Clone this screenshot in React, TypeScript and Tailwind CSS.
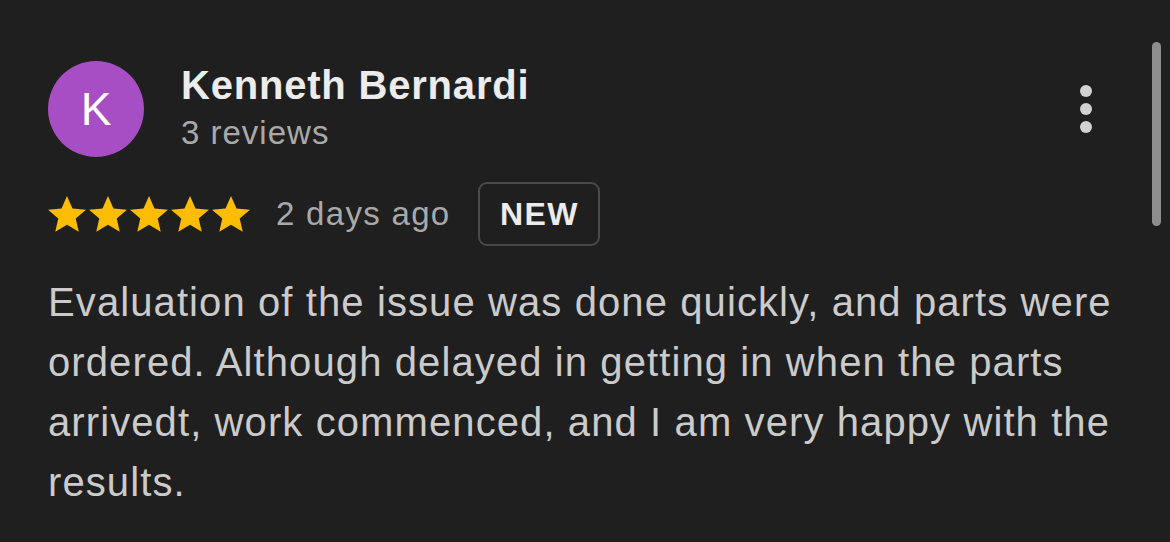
function Star() {
  return (
    <svg viewBox="2 2.2 20 19" className="w-[38px] h-[36px]" fill="#fbbc04">
      <path d="M12 2.2l2.9 6.6 7.1.6-5.4 4.7 1.6 7-6.2-3.7-6.2 3.7 1.6-7L2 9.4l7.1-.6z" />
    </svg>
  );
}

export default function App() {
  return (
    <div
      className="relative w-[1170px] h-[542px] overflow-hidden bg-[#1f1f1f]"
      style={{ fontFamily: '"Liberation Sans", Arial, sans-serif' }}
    >
      {/* Review card */}
      <div className="pl-[48px] pt-[61px]">
        {/* Header */}
        <div className="flex items-start">
          <div className="flex items-center justify-center w-[96px] h-[96px] rounded-full bg-[#a84ec5] text-white text-[46px] leading-none shrink-0">
            K
          </div>
          <div className="ml-[37px] pt-[2px] flex-1">
            <div className="text-[#ececec] text-[40px] font-bold leading-[44px] tracking-[0.8px]">Kenneth Bernardi</div>
            <div className="text-[#a9a9a9] text-[33px] leading-[40px] mt-[6px] tracking-[1px]">3 reviews</div>
          </div>
          {/* Overflow menu */}
          <button className="mt-[24px] mr-[78px] flex flex-col gap-[6px] p-0">
            <span className="block w-[12px] h-[12px] rounded-full bg-[#d2d2d2]" />
            <span className="block w-[12px] h-[12px] rounded-full bg-[#d2d2d2]" />
            <span className="block w-[12px] h-[12px] rounded-full bg-[#d2d2d2]" />
          </button>
        </div>

        {/* Rating row */}
        <div className="flex items-center mt-[25px]">
          <div className="flex gap-[3px]">
            <Star />
            <Star />
            <Star />
            <Star />
            <Star />
          </div>
          <span className="ml-[26px] text-[#a9a9a9] text-[33px] tracking-[1.3px]">2 days ago</span>
          <span className="ml-[28px] flex items-center justify-center w-[122px] h-[64px] rounded-[9px] border-2 border-[#4a4a4a] text-[#ececec] text-[32px] font-bold tracking-[1.5px]">
            NEW
          </span>
        </div>

        {/* Body */}
        <p className="mt-[26px] text-[#cbcbcb] text-[40px] leading-[60px] tracking-[1.1px] whitespace-nowrap">
          Evaluation of the issue was done quickly, and parts were
          <br />
          ordered. Although delayed in getting in when the parts
          <br />
          arrivedt, work commenced, and I am very happy with the
          <br />
          results.
        </p>
      </div>

      {/* Scrollbar */}
      <div className="absolute left-[1152px] top-[42px] w-[9px] h-[184px] rounded-full bg-[#8d8d8d]" />
    </div>
  );
}
